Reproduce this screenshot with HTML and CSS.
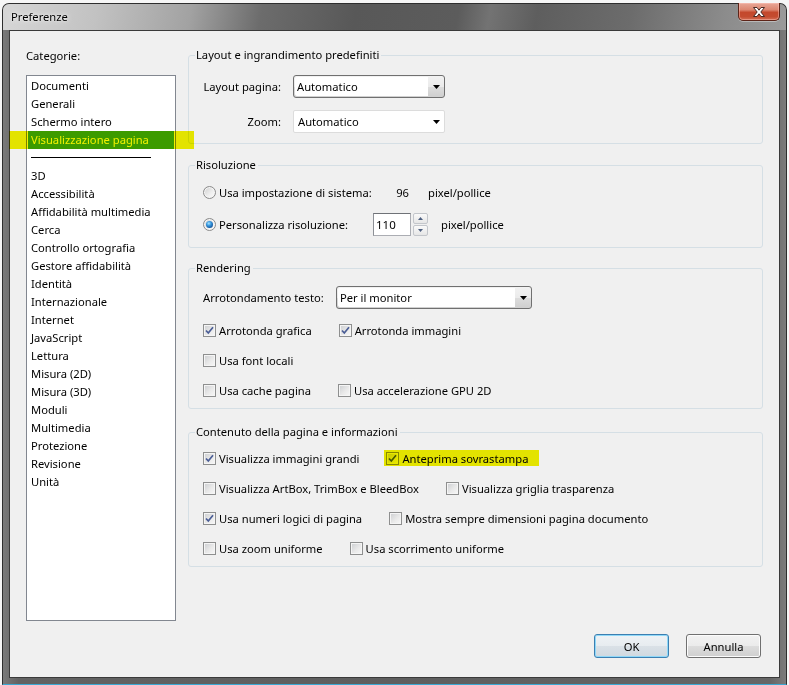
FILE: index.html
```html
<!DOCTYPE html>
<html lang="it">
<head>
<meta charset="utf-8">
<title>Preferenze</title>
<link rel="stylesheet" href="styles.css">
</head>
<body>
<div class="window">
  <div class="titlebar">
    <span class="title">Preferenze</span>
    <button class="close" aria-label="Chiudi">
      <svg width="14" height="10" viewBox="0 0 14 10"><path d="M1.5 0.5H5L7 3.2L9 0.5H12.5L8.8 5L12.5 9.5H9L7 6.8L5 9.5H1.5L5.2 5Z" fill="#fff" stroke="#4a2a24" stroke-width="1" stroke-linejoin="round"/></svg>
    </button>
  </div>
  <div class="client">
    <div class="main">
      <div class="left">
        <div class="cat-label">Categorie:</div>
        <ul class="listbox">
          <li class="item">Documenti</li>
          <li class="item">Generali</li>
          <li class="item">Schermo intero</li>
          <li class="item selected">Visualizzazione pagina</li>
          <li class="sep"><span class="sep-line"></span></li>
          <li class="item">3D</li>
          <li class="item">Accessibilità</li>
          <li class="item">Affidabilità multimedia</li>
          <li class="item">Cerca</li>
          <li class="item">Controllo ortografia</li>
          <li class="item">Gestore affidabilità</li>
          <li class="item">Identità</li>
          <li class="item">Internazionale</li>
          <li class="item">Internet</li>
          <li class="item">JavaScript</li>
          <li class="item">Lettura</li>
          <li class="item">Misura (2D)</li>
          <li class="item">Misura (3D)</li>
          <li class="item">Moduli</li>
          <li class="item">Multimedia</li>
          <li class="item">Protezione</li>
          <li class="item">Revisione</li>
          <li class="item">Unità</li>
        </ul>
      </div>

      <div class="right">
        <fieldset class="group g1">
          <legend>Layout e ingrandimento predefiniti</legend>
          <div class="gbody">
            <div class="field-row">
              <span class="flabel w78">Layout pagina:</span>
              <div class="combo dark w152">
                <span class="ctext">Automatico</span>
                <span class="cbtn"><svg width="7" height="4" viewBox="0 0 7 4"><path d="M0 0H7L3.5 4Z" fill="#000"/></svg></span>
              </div>
            </div>
            <div class="field-row">
              <span class="flabel w78">Zoom:</span>
              <div class="combo light w152">
                <span class="ctext">Automatico</span>
                <span class="cbtn"><svg width="7" height="4" viewBox="0 0 7 4"><path d="M0 0H7L3.5 4Z" fill="#000"/></svg></span>
              </div>
            </div>
          </div>
        </fieldset>

        <fieldset class="group g2">
          <legend>Risoluzione</legend>
          <div class="gbody">
            <div class="radio-row">
              <span class="rlabel"><span class="rb"></span>Usa impostazione di sistema:</span>
              <span class="sysval">96</span>
              <span class="unit1">pixel/pollice</span>
            </div>
            <div class="radio-row">
              <span class="rlabel"><span class="rb on"></span>Personalizza risoluzione:</span>
              <span class="num">110</span>
              <span class="spin">
                <span class="spin-btn"><svg width="5" height="3" viewBox="0 0 5 3"><path d="M0 3H5L2.5 0Z" fill="#4d5f80"/></svg></span>
                <span class="spin-btn"><svg width="5" height="3" viewBox="0 0 5 3"><path d="M0 0H5L2.5 3Z" fill="#4d5f80"/></svg></span>
              </span>
              <span class="unit2">pixel/pollice</span>
            </div>
          </div>
        </fieldset>

        <fieldset class="group g3">
          <legend>Rendering</legend>
          <div class="gbody">
            <div class="field-row">
              <span class="flabel w121">Arrotondamento testo:</span>
              <div class="combo dark w196">
                <span class="ctext">Per il monitor</span>
                <span class="cbtn"><svg width="7" height="4" viewBox="0 0 7 4"><path d="M0 0H7L3.5 4Z" fill="#000"/></svg></span>
              </div>
            </div>
            <div class="row first">
              <span class="check"><span class="cb"><svg width="11" height="11" viewBox="0 0 11 11"><path d="M2 5.5L4.3 8L9 2.3" fill="none" stroke="#4a5d95" stroke-width="1.7"/></svg></span>Arrotonda grafica</span>
              <span class="check"><span class="cb"><svg width="11" height="11" viewBox="0 0 11 11"><path d="M2 5.5L4.3 8L9 2.3" fill="none" stroke="#4a5d95" stroke-width="1.7"/></svg></span>Arrotonda immagini</span>
            </div>
            <div class="row">
              <span class="check"><span class="cb"></span>Usa font locali</span>
            </div>
            <div class="row">
              <span class="check"><span class="cb"></span>Usa cache pagina</span>
              <span class="check"><span class="cb"></span>Usa accelerazione GPU 2D</span>
            </div>
          </div>
        </fieldset>

        <fieldset class="group g4">
          <legend>Contenuto della pagina e informazioni</legend>
          <div class="gbody">
            <div class="row">
              <span class="check"><span class="cb"><svg width="11" height="11" viewBox="0 0 11 11"><path d="M2 5.5L4.3 8L9 2.3" fill="none" stroke="#4a5d95" stroke-width="1.7"/></svg></span>Visualizza immagini grandi</span>
              <span class="check marked"><span class="cb"><svg width="11" height="11" viewBox="0 0 11 11"><path d="M2 5.5L4.3 8L9 2.3" fill="none" stroke="#4a5d95" stroke-width="1.7"/></svg></span>Anteprima sovrastampa</span>
            </div>
            <div class="row">
              <span class="check"><span class="cb"></span>Visualizza ArtBox, TrimBox e BleedBox</span>
              <span class="check"><span class="cb"></span>Visualizza griglia trasparenza</span>
            </div>
            <div class="row">
              <span class="check"><span class="cb"><svg width="11" height="11" viewBox="0 0 11 11"><path d="M2 5.5L4.3 8L9 2.3" fill="none" stroke="#4a5d95" stroke-width="1.7"/></svg></span>Usa numeri logici di pagina</span>
              <span class="check"><span class="cb"></span>Mostra sempre dimensioni pagina documento</span>
            </div>
            <div class="row">
              <span class="check"><span class="cb"></span>Usa zoom uniforme</span>
              <span class="check"><span class="cb"></span>Usa scorrimento uniforme</span>
            </div>
          </div>
        </fieldset>
      </div>
    </div>

    <div class="buttons">
      <button class="btn default">OK</button>
      <button class="btn">Annulla</button>
    </div>
  </div>
</div>
</body>
</html>
```

FILE: styles.css
```css
* {
  box-sizing: border-box;
}

html,
body {
  margin: 0;
  padding: 0;
}

body {
  width: 789px;
  height: 685px;
  overflow: hidden;
  background: #f6f6f6;
  font-family: "Noto Sans", "Open Sans", sans-serif;
  font-size: 11.2px;
  color: #000;
}

.window {
  margin: 3px 2px 0 2px;
  height: 682px;
  border: 1px solid #2e2e2e;
  border-bottom-color: #3aa9d4;
  border-radius: 7px 7px 0 0;
  background: linear-gradient(90deg, #7a7a7a 0%, #626262 2%, #5e5e5e 50%, #666 98%, #7c7c7c 100%);
  display: flex;
  flex-direction: column;
}

/* Title bar */
.titlebar {
  height: 26px;
  flex: none;
  display: flex;
  justify-content: space-between;
  align-items: flex-start;
  padding: 0 6px 0 8px;
  border-radius: 6px 6px 0 0;
  background: linear-gradient(100deg, #d6d6d6 0%, #c2c2c2 12%, #a2a2a2 24%, #6c6c6c 33%, #585858 45%, #5c5c5c 58%, #737373 62%, #5e5e5e 68%, #6c6c6c 80%, #8c8c8c 92%, #9a9a9a 100%);
}

.title {
  margin-top: 5px;
  line-height: 16px;
  color: #000;
  text-shadow: 0 0 6px rgba(255, 255, 255, 0.9), 0 0 2px rgba(255, 255, 255, 0.8);
}

.close {
  width: 42px;
  height: 18px;
  margin-top: -1px;
  padding: 0;
  border: 1px solid #5d2418;
  border-top: none;
  border-radius: 0 0 5px 5px;
  background: linear-gradient(#e9a898 0%, #dc8670 40%, #c4482c 55%, #c44c30 80%, #d46f55 100%);
  box-shadow: inset 0 0 0 1px rgba(255, 200, 190, 0.45), 0 1px 0 rgba(255, 255, 255, 0.35);
  display: flex;
  align-items: center;
  justify-content: center;
}

/* Client area */
.client {
  flex: 1;
  margin: 0 6px 6px 6px;
  border: 1px solid #3a3a3a;
  background: #f0f0f0;
  padding: 0 16px;
  display: flex;
  flex-direction: column;
}

.main {
  display: flex;
  gap: 12px;
}

/* Left column */
.left {
  width: 150px;
  flex: none;
  padding-top: 17px;
}

.cat-label {
  line-height: 16px;
}

.listbox {
  list-style: none;
  margin: 11px 0 0 0;
  padding: 1px 0 0 0;
  height: 546px;
  border: 1px solid #828790;
  background: #fff;
}

.item {
  height: 18px;
  line-height: 18px;
  padding-left: 4px;
  white-space: nowrap;
}

.item.selected {
  position: relative;
  margin: 0 1px;
  padding-left: 3px;
  background: #3fa300;
  color: #fff;
}

.item.selected::after {
  content: "";
  position: absolute;
  left: -19px;
  right: -20px;
  top: 0;
  bottom: 0;
  background: #f2f200;
  mix-blend-mode: multiply;
}

.sep {
  height: 18px;
  padding: 8px 0 0 4px;
}

.sep-line {
  display: block;
  width: 120px;
  border-top: 1px solid #000;
}

/* Right column */
.right {
  width: 575px;
  flex: none;
  padding-top: 16px;
}

.group {
  margin: 0;
  padding: 0 14px 0 6px;
  min-width: 0;
  border: 1px solid #d5dfe5;
  border-radius: 3px;
}

.group legend {
  padding: 0 2px 0 1px;
  line-height: 16px;
}

.gbody {
  padding-left: 8px;
  display: flex;
  flex-direction: column;
}

.g1 .gbody {
  padding-top: 12px;
  padding-bottom: 10px;
  gap: 12px;
}

.g2 {
  margin-top: 13px;
}

.g2 .gbody {
  padding-top: 8px;
  padding-bottom: 11px;
  gap: 9px;
}

.g3 {
  margin-top: 12px;
}

.g3 .gbody {
  padding-top: 10px;
  padding-bottom: 8px;
  gap: 10px;
}

.g3 .row.first {
  margin-top: 1px;
}

.g4 {
  margin-top: 15px;
}

.g4 .gbody {
  padding-top: 8px;
  padding-bottom: 8px;
  gap: 10px;
}

/* Label + combo rows */
.field-row {
  display: flex;
  align-items: center;
  height: 23px;
}

.flabel {
  flex: none;
  margin-right: 12px;
  white-space: nowrap;
}

.w78 {
  width: 78px;
  text-align: right;
}

.w121 {
  width: 121px;
}

.combo {
  height: 23px;
  display: flex;
  border-radius: 3px;
}

.w152 {
  width: 152px;
}

.w196 {
  width: 196px;
}

.combo.dark {
  border: 1px solid #707070;
  background: linear-gradient(#f2f2f2 0%, #ebebeb 50%, #dddddd 50%, #cfcfcf 100%);
}

.combo.dark .ctext {
  margin: 1px 0 1px 1px;
  background: #fff;
  border-radius: 2px 0 0 2px;
}

.combo.light {
  border: 1px solid #dcdcdc;
  background: #fff;
  border-radius: 2px;
}

.ctext {
  flex: 1;
  display: flex;
  align-items: center;
  padding-left: 2px;
  white-space: nowrap;
}

.combo.light .ctext {
  padding-left: 4px;
}

.cbtn {
  width: 16px;
  flex: none;
  display: flex;
  align-items: center;
  justify-content: center;
}

/* Radio rows */
.radio-row {
  display: flex;
  align-items: center;
  height: 23px;
}

.rlabel {
  width: 170px;
  flex: none;
  display: flex;
  align-items: center;
  gap: 3px;
  white-space: nowrap;
}

.rb {
  position: relative;
  width: 13px;
  height: 13px;
  flex: none;
  border-radius: 50%;
  border: 1px solid #8b8b8b;
  background: linear-gradient(135deg, #cfcfcf 0%, #f0f0f0 60%, #fbfbfb 100%);
  box-shadow: inset 0 0 0 1px #f6f6f6;
}

.rb.on::after {
  content: "";
  position: absolute;
  left: 2px;
  top: 2px;
  width: 7px;
  height: 7px;
  border-radius: 50%;
  background: radial-gradient(circle at 40% 35%, #a8e4ff 0%, #3a9ae0 35%, #13559c 75%, #0c3a70 100%);
}

.sysval {
  width: 36px;
  text-align: right;
}

.unit1 {
  margin-left: 19px;
}

.num {
  width: 38px;
  height: 23px;
  border: 1px solid #abadb3;
  border-top-color: #6f7277;
  border-left-color: #8d9096;
  background: #fff;
  padding-left: 2px;
  display: flex;
  align-items: center;
  font-size: 11.5px;
}

.spin {
  margin-left: 2px;
  width: 15px;
  height: 23px;
  display: flex;
  flex-direction: column;
  gap: 1px;
}

.spin-btn {
  flex: 1;
  border: 1px solid #c3c6cb;
  border-radius: 2px;
  background: linear-gradient(#fafafa, #e6e6e6);
  display: flex;
  align-items: center;
  justify-content: center;
}

.unit2 {
  margin-left: 13px;
}

/* Checkbox rows */
.row {
  display: flex;
  align-items: center;
  gap: 27px;
  height: 20px;
}

.check {
  display: flex;
  align-items: center;
  gap: 3px;
  white-space: nowrap;
}

.check.marked {
  position: relative;
}

.check.marked::after {
  content: "";
  position: absolute;
  left: -2px;
  right: -11px;
  top: -1px;
  bottom: 0;
  background: #f2f200;
  mix-blend-mode: multiply;
}

.cb {
  width: 13px;
  height: 13px;
  flex: none;
  border: 1px solid #8e8f8f;
  background: linear-gradient(135deg, #cbcdd0 0%, #e9e9e9 55%, #f8f8f8 100%);
  box-shadow: inset 0 0 0 1px #f5f5f5;
  display: flex;
  align-items: center;
  justify-content: center;
}

/* Dialog buttons */
.buttons {
  margin-top: 13px;
  padding-right: 2px;
  display: flex;
  justify-content: flex-end;
  gap: 17px;
}

.btn {
  width: 75px;
  height: 24px;
  padding: 0;
  font-family: inherit;
  font-size: inherit;
  color: #000;
  border: 1px solid #707070;
  border-radius: 3px;
  background: linear-gradient(#f2f2f2 0%, #ebebeb 50%, #dddddd 50%, #cfcfcf 100%);
  box-shadow: inset 0 0 0 1px #fcfcfc;
}

.btn.default {
  border-color: #3c7fb1;
  box-shadow: inset 0 0 0 1px #8fd8f8;
  background: linear-gradient(#eef2f5 0%, #e7ecf0 50%, #dae1e7 50%, #d0d9e0 100%);
}
```
